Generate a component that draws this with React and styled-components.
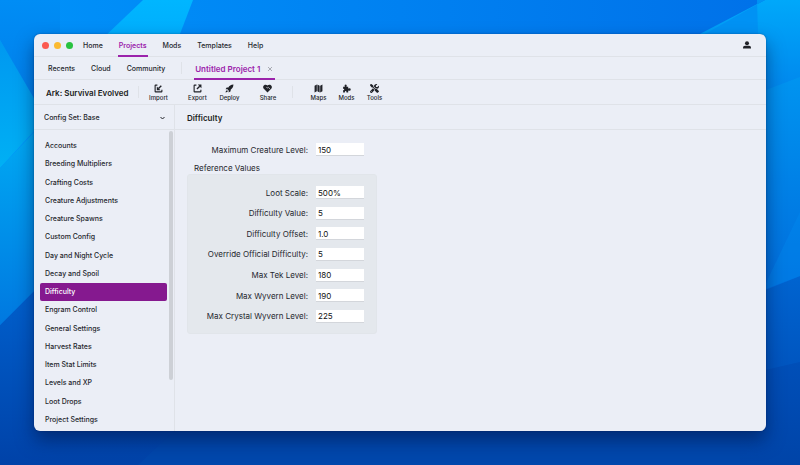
import React from "react";
import styled, { createGlobalStyle, css } from "styled-components";
import { FaScrewdriverWrench } from "react-icons/fa6";

const GlobalStyle = createGlobalStyle`
  * { box-sizing: border-box; }
  body { margin: 0; font-family: Inter, "Liberation Sans", sans-serif; font-size: 7px; line-height: 10px; color: #25272d; }
  button, input, select { font: inherit; color: inherit; margin: 0; padding: 0; border: 0; background: none; }
`;

const line = "#dfe2e8";
const accent = "#9b23ab";

const Desktop = styled.div`
  position: relative;
  display: flex;
  min-height: 100vh;
  padding: 34px;
  background: #0068d8;
`;

const Wallpaper = styled.svg`
  position: absolute;
  inset: 0;
  width: 100%;
  height: 100%;
`;

const Window = styled.div`
  position: relative;
  flex: 1;
  display: flex;
  flex-direction: column;
  min-width: 0;
  border-radius: 6px;
  overflow: hidden;
  background: #ebeef6;
  box-shadow: 0 9px 18px rgba(0, 15, 60, 0.5), 0 0 2px rgba(0, 15, 60, 0.4);
`;

const Bar = styled.div`
  display: flex;
  align-items: stretch;
  height: ${(p) => p.$height}px;
  padding: 0 ${(p) => p.$right || 0}px 0 ${(p) => p.$left}px;
  border-bottom: 1px solid ${line};
`;

const Lights = styled.div`
  display: flex;
  align-items: center;
  gap: 5px;
  margin-right: 9px;
`;

const Light = styled.span`
  width: 7px;
  height: 7px;
  border-radius: 50%;
  background: ${(p) => p.$color};
`;

const Tabs = styled.nav`
  display: flex;
  gap: 14px;
`;

const Tab = styled.button`
  padding: 2px 1px 0;
  margin-bottom: -1px;
  border-bottom: 1px solid transparent;
  font-weight: 450;
  ${(p) => p.$active && css`
    color: ${accent};
    font-weight: 600;
    border-bottom: 2px solid ${accent};
    padding-top: 3px;
  `}
`;

const ProjectTab = styled.div`
  display: flex;
  align-items: center;
  gap: 8px;
  margin-bottom: -1px;
  padding: 2px 3px 0 1px;
  border-bottom: 2px solid ${accent};
`;

const ProjectTitle = styled.button`
  color: ${accent};
  font-size: 8px;
  font-weight: 600;
`;

const CloseTab = styled.button`
  display: flex;
  color: #a9abb4;
`;

const Separator = styled.span`
  width: 1px;
  align-self: center;
  height: 12px;
  margin: 0 ${(p) => p.$right}px 0 ${(p) => p.$left}px;
  background: ${line};
`;

const UserButton = styled.button`
  display: flex;
  align-items: center;
  margin-left: auto;
`;

const Game = styled.strong`
  align-self: center;
  padding-top: 1px;
  font-size: 8px;
  font-weight: 600;
  color: #1b1d22;
  white-space: nowrap;
`;

const Tool = styled.button`
  display: flex;
  flex-direction: column;
  align-items: center;
  justify-content: center;
  gap: 1px;
  width: ${(p) => p.$width}px;
  margin-right: ${(p) => p.$after || 0}px;
  padding-top: 2px;
  font-size: 6px;
  line-height: 8px;
  font-weight: 450;

  svg { width: 9px; height: 9px; color: #202228; }
`;

const Body = styled.div`
  flex: 1;
  display: flex;
  min-height: 0;
`;

const Sidebar = styled.aside`
  display: flex;
  flex-direction: column;
  width: 141px;
  flex: none;
  border-right: 1px solid ${line};
`;

const ConfigBar = styled.div`
  display: flex;
  align-items: center;
  height: 25px;
  padding: 1px 9px 0 10px;
  border-bottom: 1px solid ${line};
`;

const ConfigSelect = styled.select`
  flex: 1;
  appearance: none;
  outline: 0;
  font-weight: 450;
`;

const ListArea = styled.div`
  flex: 1;
  display: flex;
  min-height: 0;
`;

const List = styled.nav`
  flex: 1;
  display: grid;
  grid-auto-rows: minmax(18px, 1fr);
  padding: 7px 2px 2px 6px;
`;

const Item = styled.button`
  padding: 0 5px;
  border-radius: 2px;
  text-align: left;
  font-weight: 450;
  ${(p) => p.$active && css`
    background: #85198f;
    color: #fff;
    font-weight: 500;
  `}
`;

const ScrollTrack = styled.div`
  width: 4px;
  margin: 1px 1px 0 0;
`;

const ScrollThumb = styled.div`
  height: 83%;
  border-radius: 2px;
  background: #cdd0d6;
`;

const Content = styled.main`
  flex: 1;
  min-width: 0;
`;

const Heading = styled.h1`
  display: flex;
  align-items: center;
  height: 25px;
  margin: 0;
  padding: 1px 0 0 12px;
  border-bottom: 1px solid ${line};
  font-size: 8px;
  font-weight: 600;
  color: #1b1d22;
`;

const Form = styled.form`
  width: 202px;
  padding: 13px 0 0 12px;
`;

const Field = styled.label`
  display: flex;
  align-items: center;
  justify-content: flex-end;
  gap: 8px;
  padding-right: 13px;
  font-size: 8px;
  white-space: nowrap;
`;

const Input = styled.input`
  width: 48px;
  height: 13px;
  padding: 1px 2px 0;
  background: #fff;
  border-bottom: 1px solid #d3d6db;
  color: #111;
`;

const GroupTitle = styled.h2`
  margin: 7px 0 1px 7px;
  font-size: 8px;
  line-height: 10px;
  font-weight: 400;
`;

const Group = styled.div`
  display: flex;
  flex-direction: column;
  justify-content: space-between;
  min-height: 160px;
  padding: 11px 0 10px;
  border: 1px solid #e1e5ea;
  border-radius: 3px;
  background: #e4e8ed;

  ${Field} { padding-right: 12px; }
`;

const ImportIcon = () => (
  <svg viewBox="0 0 16 16" fill="none" stroke="currentColor" strokeWidth="2">
    <path d="M6 2H2.8Q2 2 2 2.8V13.2Q2 14 2.8 14H13.2Q14 14 14 13.2V10" />
    <path d="M13 3L8 8" strokeWidth="2.4" />
    <path d="M5 4.5V11H11.5Z" fill="currentColor" stroke="none" />
  </svg>
);

const ExportIcon = () => (
  <svg viewBox="0 0 16 16" fill="none" stroke="currentColor" strokeWidth="2">
    <path d="M6 2H2.8Q2 2 2 2.8V13.2Q2 14 2.8 14H13.2Q14 14 14 13.2V10" />
    <path d="M7 9L12 4" strokeWidth="2.4" />
    <path d="M8.5 1H15V7.5Z" fill="currentColor" stroke="none" />
  </svg>
);

const DeployIcon = () => (
  <svg viewBox="0 0 16 16" fill="currentColor">
    <path d="M15 1C10.500 1 7.500 3.500 6 6H3L1 9.500H4.500L6.500 11.500V15L10 13V10C12.500 8.500 15 5.500 15 1Z" />
    <path d="M1 15Q1 11.500 3.500 11Q5.500 11.500 5 13Q4.500 15 1 15Z" />
  </svg>
);

const ShareIcon = () => (
  <svg viewBox="0 0 16 16">
    <path d="M8 15L1.400 8.400C-.5 6.400 0 3.200 2 2C4.200.7 6.500 1.300 8 2.500C9.500 1.300 11.800.7 14 2C16 3.200 16.500 6.400 14.600 8.400Z" fill="currentColor" />
    <path d="M6 6Q7.500 8 9.500 6L12.500 9" fill="none" stroke="#ebeef6" strokeWidth="1.200" />
  </svg>
);

const MapIcon = () => (
  <svg viewBox="0 0 16 16" fill="currentColor">
    <path d="M1 3L5 1V13L1 15ZM6 1L10 3V15L6 13ZM11 3L15 1V13L11 15Z" />
  </svg>
);

const ModsIcon = () => (
  <svg viewBox="0 0 16 16" fill="currentColor">
    <path d="M2 5H5Q3.500 1 6.500 1Q9.500 1 8 5H11V8Q15.500 6.500 15.500 9.700Q15.500 13 11 11.500V15H8Q8 12.500 6.500 12.500Q5 12.500 5 15H2V11Q4 11 4 9.700Q4 8.500 2 8.500Z" />
  </svg>
);

const UserIcon = () => (
  <svg width="8" height="8" viewBox="0 0 16 16" fill="#202228">
    <circle cx="8" cy="4.500" r="4" />
    <path d="M0 15V13Q0 9.500 4 9.500H12Q16 9.500 16 13V15Z" />
  </svg>
);

const MENU = ["Home", "Projects", "Mods", "Templates", "Help"];
const SECTIONS = [
  "Accounts", "Breeding Multipliers", "Crafting Costs", "Creature Adjustments",
  "Creature Spawns", "Custom Config", "Day and Night Cycle", "Decay and Spoil",
  "Difficulty", "Engram Control", "General Settings", "Harvest Rates",
  "Item Stat Limits", "Levels and XP", "Loot Drops", "Project Settings",
];
const REFERENCE_VALUES = [
  ["Loot Scale:", "500%"],
  ["Difficulty Value:", "5"],
  ["Difficulty Offset:", "1.0"],
  ["Override Official Difficulty:", "5"],
  ["Max Tek Level:", "180"],
  ["Max Wyvern Level:", "190"],
  ["Max Crystal Wyvern Level:", "225"],
];

const Gradient = ({ id, from, to, x2 = 0, y2 = 1 }) => (
  <linearGradient id={id} x1="0" y1="0" x2={x2} y2={y2}>
    <stop stopColor={from} />
    <stop offset="1" stopColor={to} />
  </linearGradient>
);

const Background = () => (
  <Wallpaper viewBox="0 0 800 465" preserveAspectRatio="none" aria-hidden="true">
    <defs>
      <Gradient id="top" from="#0092fa" to="#0070e8" x2={1} y2={0} />
      <Gradient id="beam" from="#00b6ff" to="#00a8fb" />
      <Gradient id="leftTop" from="#008df5" to="#0078e4" />
      <Gradient id="leftMid" from="#0098f0" to="#00b0f4" />
      <Gradient id="leftLow" from="#00b0f6" to="#0078e0" />
      <Gradient id="leftBase" from="#0064d2" to="#0042a8" />
      <Gradient id="right" from="#00a8fa" to="#0080ea" />
      <Gradient id="rightMid" from="#0094f0" to="#006cdc" />
      <Gradient id="rightLow" from="#0064d0" to="#0054be" />
      <Gradient id="rightBase" from="#004fb8" to="#0044a8" />
    </defs>
    <rect width="800" height="465" fill="url(#top)" />
    <path d="M143 0H193L170 60H80Z" fill="url(#beam)" />
    <path d="M0 0H60V150L0 40Z" fill="url(#leftTop)" />
    <path d="M0 40L35 100V130L0 168Z" fill="url(#leftMid)" />
    <path d="M0 168L60 105V265L0 325Z" fill="url(#leftLow)" />
    <path d="M0 325L60 265V420H740V360L800 345V465H0Z" fill="url(#leftBase)" />
    <path d="M138 465L180 425H740V465Z" fill="#0047ac" />
    <path d="M765 0H800V85L740 110V60H650Z" fill="url(#right)" />
    <path d="M765 0H757L758 34H705Z" fill="#0092f4" />
    <path d="M800 77L740 100V300L800 276Z" fill="url(#rightMid)" />
    <path d="M800 276L740 300V376L800 362Z" fill="url(#rightLow)" />
    <path d="M800 362L740 376V465H800Z" fill="url(#rightBase)" />
    <path d="M800 212L766 283V289L800 276Z" fill="#008cf0" opacity="0.350" />
  </Wallpaper>
);

export default function App() {
  return (
    <>
      <GlobalStyle />
      <Desktop>
        <Background />
        <Window>
          <Bar $height={23} $left={8} $right={15}>
            <Lights>
              <Light $color="#fb5a50" />
              <Light $color="#fbba31" />
              <Light $color="#29c240" />
            </Lights>
            <Tabs>
              {MENU.map((name) => (
                <Tab key={name} type="button" $active={name === "Projects"}>{name}</Tab>
              ))}
            </Tabs>
            <UserButton type="button" aria-label="Account"><UserIcon /></UserButton>
          </Bar>
          <Bar $height={23} $left={13}>
            <Tabs>
              <Tab type="button">Recents</Tab>
              <Tab type="button">Cloud</Tab>
              <Tab type="button">Community</Tab>
            </Tabs>
            <Separator $left={15} $right={12} />
            <ProjectTab>
              <ProjectTitle type="button">Untitled Project 1</ProjectTitle>
              <CloseTab type="button" aria-label="Close tab">
                <svg width="4" height="4" viewBox="0 0 4 4" stroke="currentColor"><path d="M0 0L4 4M4 0L0 4" /></svg>
              </CloseTab>
            </ProjectTab>
          </Bar>
          <Bar $height={25} $left={12}>
            <Game>Ark: Survival Evolved</Game>
            <Separator $left={10} $right={5} />
            <Tool type="button" $width={28} $after={9}><ImportIcon />Import</Tool>
            <Tool type="button" $width={32}><ExportIcon />Export</Tool>
            <Tool type="button" $width={32}><DeployIcon />Deploy</Tool>
            <Tool type="button" $width={45}><ShareIcon />Share</Tool>
            <Separator $left={2} $right={11} />
            <Tool type="button" $width={28}><MapIcon />Maps</Tool>
            <Tool type="button" $width={28}><ModsIcon />Mods</Tool>
            <Tool type="button" $width={28}><FaScrewdriverWrench />Tools</Tool>
          </Bar>
          <Body>
            <Sidebar>
              <ConfigBar>
                <ConfigSelect aria-label="Config set">
                  <option>Config Set: Base</option>
                </ConfigSelect>
                <svg width="5" height="4" viewBox="0 0 5 4" fill="none" stroke="#202228"><path d="M.5 1L2.500 3L4.500 1" /></svg>
              </ConfigBar>
              <ListArea>
                <List>
                  {SECTIONS.map((name) => (
                    <Item key={name} type="button" $active={name === "Difficulty"}>{name}</Item>
                  ))}
                </List>
                <ScrollTrack aria-hidden="true"><ScrollThumb /></ScrollTrack>
              </ListArea>
            </Sidebar>
            <Content>
              <Heading>Difficulty</Heading>
              <Form>
                <Field>Maximum Creature Level:<Input defaultValue="150" /></Field>
                <GroupTitle>Reference Values</GroupTitle>
                <Group>
                  {REFERENCE_VALUES.map(([label, value]) => (
                    <Field key={label}>{label}<Input defaultValue={value} /></Field>
                  ))}
                </Group>
              </Form>
            </Content>
          </Body>
        </Window>
      </Desktop>
    </>
  );
}
